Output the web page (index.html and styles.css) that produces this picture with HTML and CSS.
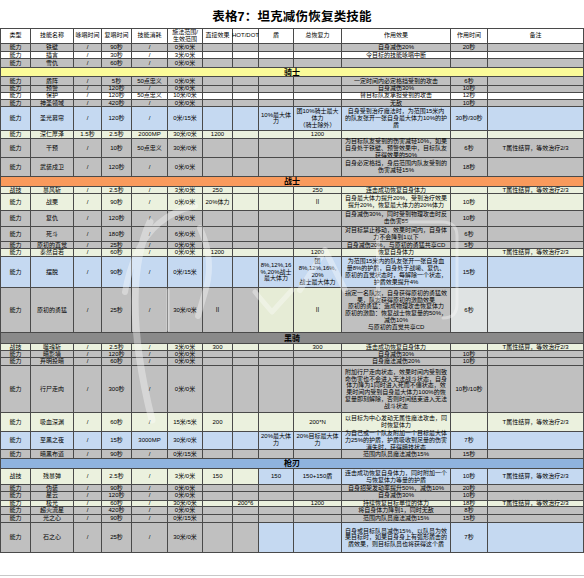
FILE: index.html
```html
<!DOCTYPE html>
<html lang="zh">
<head>
<meta charset="utf-8">
<title>表格7：坦克减伤恢复类技能</title>
<link rel="stylesheet" href="styles.css">
</head>
<body>
<div class="title">表格7：坦克减伤恢复类技能</div>
<div class="sheet">
  <div class="row w hd"><div>类型</div><div>技能名称</div><div>咏唱时间</div><div>复唱时间</div><div>技能消耗</div><div>施法范围/<br>生效范围</div><div>直接效果</div><div>HOT/DOT</div><div>盾</div><div>总恢复力</div><div>作用效果</div><div>作用时间</div><div>备注</div></div>

  <div class="row g"><div>能力</div><div>铁壁</div><div>/</div><div>90秒</div><div>/</div><div>0米/0米</div><div></div><div></div><div></div><div></div><div>自身减伤20%</div><div>20秒</div><div></div></div>
  <div class="row w"><div>能力</div><div>插言</div><div>/</div><div>30秒</div><div>/</div><div>3米/0米</div><div></div><div></div><div></div><div></div><div>令目标的技能咏唱中断</div><div></div><div></div></div>
  <div class="row g"><div>能力</div><div>雪仇</div><div>/</div><div>60秒</div><div>/</div><div>0米/0米</div><div></div><div></div><div></div><div></div><div></div><div></div><div></div></div>

  <div class="band knight">骑士</div>

  <div class="row g"><div>能力</div><div>盾阵</div><div>/</div><div>5秒</div><div>50点忠义</div><div>0米/0米</div><div></div><div></div><div></div><div></div><div>一定时间内必定格挡受到的攻击</div><div>6秒</div><div></div></div>
  <div class="row g"><div>能力</div><div>预警</div><div>/</div><div>120秒</div><div>/</div><div>0米/0米</div><div></div><div></div><div></div><div></div><div>自身减伤30%</div><div>10秒</div><div></div></div>
  <div class="row w"><div>能力</div><div>保护</div><div>/</div><div>120秒</div><div>50点忠义</div><div>10米/0米</div><div></div><div></div><div></div><div></div><div>替目标队友承担受到的攻击</div><div>12秒</div><div></div></div>
  <div class="row g"><div>能力</div><div>神圣领域</div><div>/</div><div>420秒</div><div>/</div><div>0米/0米</div><div></div><div></div><div></div><div></div><div>无敌</div><div>10秒</div><div></div></div>
  <div class="row b"><div>能力</div><div>圣光幕帘</div><div>/</div><div>120秒</div><div>/</div><div>0米/15米</div><div></div><div></div><div>10%最大体<br>力</div><div>团10%骑士最大<br>体力<br>（骑士除外）</div><div>自身受到治疗魔法时，为范围15米内的队友张开一张自身最大体力10%的护盾</div><div>30秒/30秒</div><div></div></div>
  <div class="row y"><div>能力</div><div>深仁厚泽</div><div>1.5秒</div><div>2.5秒</div><div>2000MP</div><div>30米/0米</div><div>1200</div><div></div><div></div><div>1200</div><div></div><div></div><div></div></div>
  <div class="row g"><div>能力</div><div>干预</div><div>/</div><div>10秒</div><div>50点忠义</div><div>30米/0米</div><div></div><div></div><div></div><div></div><div>为目标队友受到的伤害减轻10%，如果自身处于铁壁、预警效果中，目标队友获得效果的50%</div><div>6秒</div><div>T属性结算，等效治疗2/3</div></div>
  <div class="row g"><div>能力</div><div>武装戍卫</div><div>/</div><div>120秒</div><div>/</div><div>0米/0米</div><div></div><div></div><div></div><div></div><div>自身必定格挡，身后范围内队友受到的伤害减轻15%</div><div>18秒</div><div></div></div>

  <div class="band warrior">战士</div>

  <div class="row y"><div>战技</div><div>暴风斩</div><div>/</div><div>2.5秒</div><div>/</div><div>3米/0米</div><div>250</div><div></div><div></div><div>250</div><div>连击成功恢复自身体力</div><div></div><div>T属性结算，等效治疗2/3</div></div>
  <div class="row y"><div>能力</div><div>战栗</div><div>/</div><div>90秒</div><div>/</div><div>0米/0米</div><div>20%体力</div><div></div><div></div><div>Ⅱ</div><div>自身最大体力提升20%，受到治疗效果提升20%，恢复最大体力的20%体力</div><div>10秒</div><div></div></div>
  <div class="row g"><div>能力</div><div>复仇</div><div>/</div><div>120秒</div><div>/</div><div>0米/0米</div><div></div><div></div><div></div><div></div><div>自身减伤30%，同时受到物理攻击时反击伤害55</div><div>10秒</div><div></div></div>
  <div class="row g"><div>能力</div><div>死斗</div><div>/</div><div>180秒</div><div>/</div><div>6米/0米</div><div></div><div></div><div></div><div></div><div>对目标禁止移动，效果时间内，自身体力不会降到1以下</div><div>6秒</div><div></div></div>
  <div class="row g"><div>能力</div><div>原初的直觉</div><div>/</div><div>25秒</div><div>/</div><div>0米/0米</div><div></div><div></div><div></div><div></div><div>自身减伤20%，与原初的勇猛共享CD</div><div>5秒</div><div></div></div>
  <div class="row y"><div>能力</div><div>泰然自若</div><div>/</div><div>60秒</div><div>/</div><div>0米/0米</div><div>1200</div><div></div><div></div><div>1200</div><div>恢复自身体力</div><div></div><div>T属性结算，等效治疗2/3</div></div>
  <div class="row b"><div>能力</div><div>摆脱</div><div>/</div><div>90秒</div><div>/</div><div>0米/15米</div><div></div><div></div><div>8%,12%,16<br>%,20%战士<br>最大体力</div><div>团<br>8%,12%,16%,<br>20%<br>战士最大体力</div><div>为范围15米内的队友张开一张自身血量8%的护盾，自身处于战嚎、复仇、原初的直觉状态时，每解除一个状态，护盾效果提升4%</div><div>15秒</div><div></div></div>
  <div class="row g"><div>能力</div><div>原初的勇猛</div><div>/</div><div>25秒</div><div>/</div><div>30米/0米</div><div>Ⅱ</div><div></div><div class="cy"></div><div class="cy">Ⅱ</div><div>指定一名队友，自身获得原初的勇猛效果，队友获得原初的激励效果<br>原初的勇猛：造成物理攻击恢复体力<br>原初的激励：恢复战士恢复量的50%，减伤10%<br>与原初的直觉共享CD</div><div class="cw">6秒</div><div class="cw"></div></div>

  <div class="band dark">黑骑</div>

  <div class="row y"><div>战技</div><div>噬魂斩</div><div>/</div><div>2.5秒</div><div>/</div><div>3米/0米</div><div>300</div><div></div><div></div><div>300</div><div>连击成功恢复自身体力</div><div></div><div>T属性结算，等效治疗2/3</div></div>
  <div class="row g"><div>能力</div><div>暗影墙</div><div>/</div><div>120秒</div><div>/</div><div>0米/0米</div><div></div><div></div><div></div><div></div><div>自身减伤30%</div><div>10秒</div><div></div></div>
  <div class="row g"><div>能力</div><div>弃明投暗</div><div>/</div><div>60秒</div><div>/</div><div>0米/0米</div><div></div><div></div><div></div><div></div><div>自身魔法减伤20%</div><div>10秒</div><div></div></div>
  <div class="row g"><div>能力</div><div>行尸走肉</div><div>/</div><div>300秒</div><div>/</div><div>0米/0米</div><div></div><div></div><div></div><div></div><div>附加行尸走肉状态，效果时间内受到致命伤害也不会进入无法战斗状态，自身体力降为1同时进入死而不僵状态，效果时间内受到自身最大体力100%的恢复量即刻解除，否则时间结束进入无法战斗状态</div><div>10秒/10秒</div><div></div></div>
  <div class="row y"><div>能力</div><div>吸血深渊</div><div>/</div><div>60秒</div><div>/</div><div>15米/5米</div><div>200</div><div></div><div></div><div>200*N</div><div>以目标为中心发动无属性魔法攻击，同时恢复体力</div><div></div><div>T属性结算，等效治疗2/3</div></div>
  <div class="row b"><div>能力</div><div>至黑之夜</div><div>/</div><div>15秒</div><div>3000MP</div><div>30米/0米</div><div></div><div></div><div>20%最大体<br>力</div><div>20%目标最大体<br>力</div><div>为自己或一个队友附加一个目标最大体力25%的护盾，护盾吸收到足量的伤害消失时，获得暗技状态</div><div>7秒</div><div></div></div>
  <div class="row g"><div>能力</div><div>暗黑布道</div><div>/</div><div>90秒</div><div>/</div><div>0米/15米</div><div></div><div></div><div></div><div></div><div>范围内队员魔法减伤15%</div><div>15秒</div><div></div></div>

  <div class="band gunb">枪刃</div>

  <div class="row y"><div>战技</div><div>残暴弹</div><div>/</div><div>2.5秒</div><div>/</div><div>3米/0米</div><div>150</div><div></div><div class="cb">150</div><div class="cb">150+150盾</div><div class="cb">连击成功恢复自身体力，同时附加一个与恢复体力等量的护盾</div><div class="cb">10秒</div><div class="cb">T属性结算，等效治疗2/3</div></div>
  <div class="row g"><div>能力</div><div>伪装</div><div>/</div><div>90秒</div><div>/</div><div>0米/0米</div><div></div><div></div><div></div><div></div><div>自身招架发动率提升50%，减伤10%</div><div>20秒</div><div></div></div>
  <div class="row g"><div>能力</div><div>星云</div><div>/</div><div>120秒</div><div>/</div><div>0米/0米</div><div></div><div></div><div></div><div></div><div>自身减伤30%</div><div>10秒</div><div></div></div>
  <div class="row y"><div>能力</div><div>极光</div><div>/</div><div>60秒</div><div>/</div><div>30米/0米</div><div></div><div>200*6</div><div></div><div>1200</div><div>持续恢复目标单位的体力</div><div>18秒</div><div>T属性结算，等效治疗2/3</div></div>
  <div class="row g"><div>能力</div><div>超火流星</div><div>/</div><div>420秒</div><div>/</div><div>0米/0米</div><div></div><div></div><div></div><div></div><div>将自身体力降到1，同时无敌</div><div>8秒</div><div></div></div>
  <div class="row g"><div>能力</div><div>光之心</div><div>/</div><div>90秒</div><div>/</div><div>0米/15米</div><div></div><div></div><div></div><div></div><div>范围内队员魔法减伤15%</div><div>15秒</div><div></div></div>
  <div class="row g"><div>能力</div><div>石之心</div><div>/</div><div>25秒</div><div>/</div><div>30米/0米</div><div></div><div></div><div class="cb"></div><div class="cb"></div><div class="cb">自身或目标队员减伤15%，以队员为效果目标时，如果自身身上有弧形盾击的盾效果，则目标队员也将获得这个盾</div><div class="cb">7秒</div><div class="cb"></div></div>
</div>
<div class="foot"></div>
<svg class="mark" width="584" height="578" viewBox="0 0 584 578" aria-hidden="true">
  <g fill="none" stroke="#ffffff" stroke-linecap="round" stroke-linejoin="round">
    <path d="M125 292 Q138 218 195 206" stroke-width="6"/>
    <path d="M150 222 C128 270 132 340 152 420" stroke-width="7"/>
    <path d="M168 290 L168 330" stroke-width="3"/>
    <path d="M200 228 Q215 260 205 292 L198 316" stroke-width="6"/>
    <path d="M300 290 L325 250 L345 290" stroke-width="6"/>
    <path d="M255 292 L272 312 L292 290" stroke-width="5"/>
    <path d="M378 236 L378 300" stroke-width="4"/>
    <path d="M405 222 L442 222 Q457 222 457 236 L457 304 Q457 318 443 318" stroke-width="3"/>
  </g>
</svg>
</body>
</html>
```

FILE: styles.css
```css
html, body {
  margin: 0;
  padding: 0;
  background: #ffffff;
}

body {
  position: relative;
  width: 584px;
  height: 578px;
  overflow: hidden;
  font-family: "Liberation Sans", "Noto Sans CJK SC", sans-serif;
  color: #000;
}

.title {
  height: 28px;
  display: flex;
  align-items: center;
  justify-content: center;
  font-size: 12.5px;
  font-weight: bold;
  letter-spacing: 0.2px;
  padding-top: 2px;
  box-sizing: border-box;
}

.sheet {
  width: 584px;
  box-sizing: border-box;
  display: grid;
  grid-template-columns: 30px 43px 28px 30px 36px 35px 30px 26px 35px 48px 109px 37px 96px;
  grid-template-rows:
    14.5px 8.2px 7.6px 9px 8.7px
    9px 6.7px 7.3px 7.3px 23.4px 8.6px 19px 19px
    10px 7px 16.4px 16px 15.6px 7px 7.4px 31.6px 45px
    10.7px 7px 7px 8px 47.3px 18.4px 18.3px 9px
    10.3px 15.7px 7.3px 8.4px 6.6px 7.7px 8.3px 30px;
  border-top: 1px solid #4a4a4a;
  border-left: 1px solid #4a4a4a;
}

.row {
  display: contents;
}

.row > div,
.band {
  box-sizing: border-box;
  border-right: 1px solid #4a4a4a;
  border-bottom: 1px solid #4a4a4a;
  display: flex;
  align-items: center;
  justify-content: center;
  text-align: center;
  font-size: 6px;
  line-height: 6.75px;
  min-width: 0;
  min-height: 0;
  padding: 0;
  overflow: visible;
  white-space: nowrap;
}

/* the effect column wraps its text */
.row > div:nth-child(11) {
  white-space: normal;
  padding: 0 3px;
}

.hd > div { background: #ffffff; }
.w > div { background: #ffffff; }
.g > div { background: #c0c0c0; }
.b > div { background: #c5d9f1; }
.y > div { background: #ebf1de; }

.row > div.cb { background: #c5d9f1; }
.row > div.cy { background: #e6ecd6; }
.row > div.cw { background: #dfe3e3; }

.band {
  grid-column: 1 / -1;
  font-size: 8px;
  font-weight: bold;
  line-height: 9px;
}

.knight { background: #fbfb99; }
.warrior { background: #f99a5c; }
.dark { background: #8a8a8a; }
.gunb { background: #8fb3de; }

.foot {
  margin-top: 22px;
  height: 1px;
  background: #c8c8c8;
}

/* faint watermark laid over the sheet */
.mark {
  position: absolute;
  left: 0;
  top: 0;
  opacity: 0.35;
  pointer-events: none;
}
```
